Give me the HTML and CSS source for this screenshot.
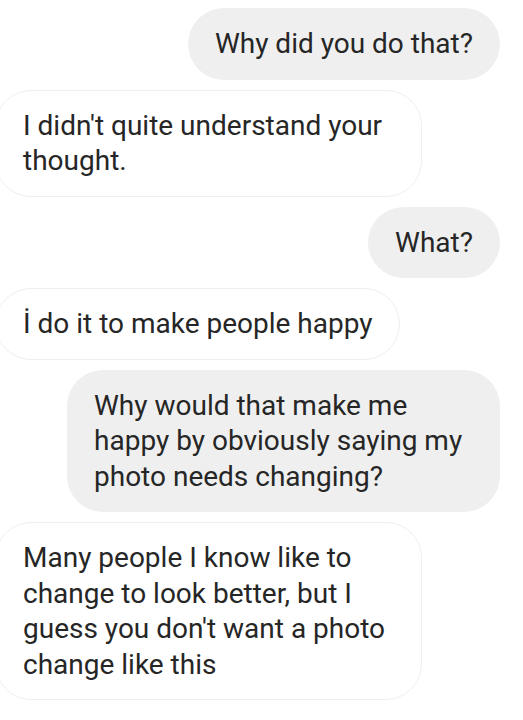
FILE: index.html
```html
<!DOCTYPE html>
<html lang="en">
<head>
    <meta charset="UTF-8">
    <meta name="viewport" content="width=device-width, initial-scale=1.0">
    <title>Chat</title>
    <link rel="stylesheet" href="styles.css">
</head>
<body>
    <div class="chat">
        <div class="msg sent">Why did you do that?</div>
        <div class="msg received">I didn't quite understand your thought.</div>
        <div class="msg sent">What?</div>
        <div class="msg received">İ do it to make people happy</div>
        <div class="msg sent">Why would that make me happy by obviously saying my photo needs changing?</div>
        <div class="msg received">Many people I know like to change to look better, but I guess you don't want a photo change like this</div>
    </div>
</body>
</html>
```

FILE: styles.css
```css
body {
    margin: 0;
    background: #fff;
    font-family: Roboto, 'Noto Sans', sans-serif;
    color: #262626;
    overflow: hidden;
}
.chat {
    display: flex;
    flex-direction: column;
    gap: 10px;
    padding: 8px 23px 0 0;
}
.msg {
    font-size: 28px;
    line-height: 35.5px;
    padding: 18px 27px;
    border-radius: 36px;
}
.sent {
    align-self: flex-end;
    background: #efefef;
    max-width: 379px;
}
.received {
    align-self: flex-start;
    margin-left: -5px;
    border: 1px solid #efefef;
    padding: 17px 26px 17px 27px;
    max-width: 372px;
}
```
